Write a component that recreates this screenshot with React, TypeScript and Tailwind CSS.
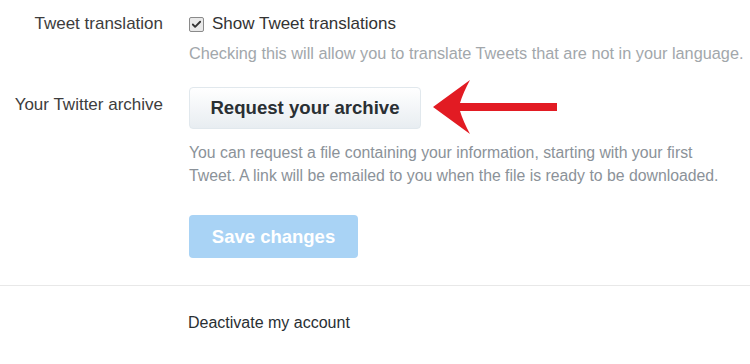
import { Check } from 'lucide-react';

function RedArrow() {
  return (
    <svg width="126" height="56" viewBox="0 0 126 56">
      <path
        d="M0 27 L37 0 Q30 13 27 23 L124 23 L124 31 L27 31 Q30 41 37 54 Z"
        fill="#e21b23"
      />
    </svg>
  );
}

export default function App() {
  return (
    <div className="w-[750px] h-[364px] bg-white overflow-hidden font-['Liberation_Sans',Arial,sans-serif]">
      {/* Tweet translation */}
      <div className="flex pt-[13px]">
        <div className="w-[163px] shrink-0 text-right text-[17px] leading-[22px] text-[#3d3d3d]">
          Tweet translation
        </div>
        <div className="ml-[26px] flex-1">
          <label className="flex items-center gap-[8px] text-[17px] leading-[22px] text-[#333]">
            <span className="w-[15px] h-[15px] rounded-[2px] border border-[#8a8a8a] bg-[#e9e9e9] flex items-center justify-center">
              <Check size={11} strokeWidth={4} className="text-[#333]" />
            </span>
            Show Tweet translations
          </label>
          <p className="mt-[8px] text-[16.3px] leading-[20px] text-[#a2a7ab] whitespace-nowrap">
            Checking this will allow you to translate Tweets that are not in your language.
          </p>
        </div>
      </div>

      {/* Twitter archive */}
      <div className="flex mt-[24px]">
        <div className="w-[163px] shrink-0 text-right text-[17px] leading-[22px] text-[#3d3d3d] pt-[7px]">
          Your Twitter archive
        </div>
        <div className="ml-[26px] flex-1">
          <div className="relative w-[232px]">
            <button className="h-[42px] w-[232px] rounded-[4px] border border-[#e1e8ed] bg-gradient-to-b from-white to-[#e8edf1] text-[18.6px] font-bold text-[#292f33]">
              Request your archive
            </button>
            {/* annotation arrow */}
            <div className="absolute left-[244px] top-[-7px]">
              <RedArrow />
            </div>
          </div>
          <p className="mt-[12px] text-[15.8px] leading-[23px] text-[#8b9299] w-[545px]">
            You can request a file containing your information, starting with your first
            <br />
            Tweet. A link will be emailed to you when the file is ready to be downloaded.
          </p>
          <button className="mt-[28px] h-[43px] w-[169px] rounded-[4px] bg-[#a9d3f5] text-[18.5px] font-bold text-white">
            Save changes
          </button>
        </div>
      </div>

      <div className="mt-[27px] border-t border-[#e8e8e8]" />

      <div className="pl-[188px] pt-[26px] text-[16px] leading-[22px] text-[#292f33]">
        Deactivate my account
      </div>
    </div>
  );
}
